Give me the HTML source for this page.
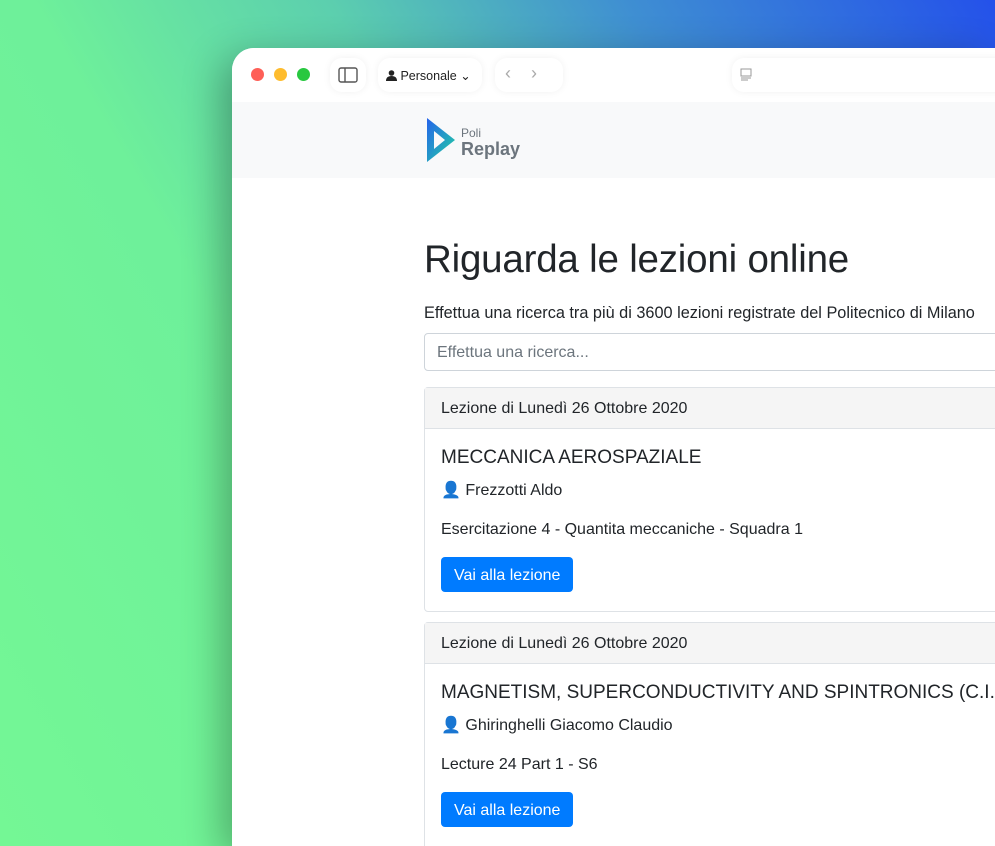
<!DOCTYPE html>
<html><head><meta charset="utf-8"><style>
*{box-sizing:border-box;margin:0;padding:0}
html,body{width:995px;height:846px;overflow:hidden}
body{position:relative;font-family:"Liberation Sans",sans-serif;
background:linear-gradient(60deg,#74f795 0%,#6ef09a 35%,#5ccfae 55%,#3f8fd2 75%,#2451ea 100%);}
.win{position:absolute;left:232px;top:48px;width:763px;height:798px;background:#fff;border-radius:22px 0 0 0;overflow:hidden;box-shadow:-10px 10px 40px rgba(0,0,0,.3);color:#212529}
.tb{height:54px;background:#fff;position:relative}
.dot{position:absolute;top:20px;width:13px;height:13px;border-radius:50%}
.pill{position:absolute;top:10px;height:34px;background:#fff;border-radius:12px;box-shadow:0 0 8px rgba(0,0,0,.06)}
.nav{height:76px;background:#f8f9fa;position:relative}
.c{position:absolute;left:192px;color:#212529}
h1{font-size:38.5px;font-weight:400;letter-spacing:-.2px}
.card{position:absolute;left:192px;width:620px;border:1px solid #dee2e6;border-radius:4px}
.ch{height:41px;background:#f5f5f5;border-bottom:1px solid #dee2e6;padding:12px 16px;font-size:16px;color:#212529}
.cb{padding:0 16px;position:relative;color:#212529}
.btn{display:inline-block;background:#007bff;color:#fff;font-size:16px;padding:10px 13px 7px;border-radius:4px}
</style></head><body>
<div class="win">
 <div class="tb">
  <div class="dot" style="left:19px;background:#fe5f57"></div>
  <div class="dot" style="left:42px;background:#febc2e"></div>
  <div class="dot" style="left:65px;background:#28c840"></div>
  <div class="pill" style="left:98px;width:36px"><svg width="20" height="16" style="position:absolute;left:8px;top:9px"><rect x="1" y="1" width="18" height="14" rx="2" fill="none" stroke="#555" stroke-width="1.4"/><line x1="7" y1="1" x2="7" y2="15" stroke="#555" stroke-width="1.4"/></svg></div>
  <div class="pill" style="left:146px;width:104px;font-size:12.5px;color:#222;padding:10px 0 0 8px"><svg width="11" height="11" style="vertical-align:-1px"><circle cx="5.5" cy="3" r="2.8" fill="#222"/><path d="M0 11 Q0 6 5.5 6 Q11 6 11 11Z" fill="#222"/></svg> Personale ⌄</div>
  <div class="pill" style="left:263px;width:68px;color:#aaa;font-size:18px;padding:5px 0 0 10px">‹ &nbsp;&nbsp; ›</div>
  <div class="pill" style="left:500px;width:400px"><svg width="14" height="14" style="position:absolute;left:8px;top:10px"><rect x="1" y="1" width="10" height="7" fill="none" stroke="#999"/><line x1="1" y1="10" x2="11" y2="10" stroke="#999"/><line x1="1" y1="12" x2="8" y2="12" stroke="#999"/></svg></div>
 </div>
 <div class="nav">
  <svg width="32" height="48" style="position:absolute;left:193px;top:14px"><defs><linearGradient id="g" x1="0" y1="0" x2="1" y2="1"><stop offset="0" stop-color="#2563eb"/><stop offset="1" stop-color="#22d3a0"/></linearGradient></defs><path d="M2 2 L30 24 L2 46 Z M9 15 L9 33 L20 24 Z" fill="url(#g)" fill-rule="evenodd"/></svg>
  <div style="position:absolute;left:229px;top:24px;color:#6c757d;font-size:12px">Poli</div>
  <div style="position:absolute;left:229px;top:37px;color:#6c757d;font-size:18px;font-weight:bold">Replay</div>
 </div>
 <div class="c" style="top:190px"><h1>Riguarda le lezioni online</h1></div>
 <div class="c" style="top:256px;font-size:16.3px">Effettua una ricerca tra più di 3600 lezioni registrate del Politecnico di Milano</div>
 <div style="position:absolute;left:192px;top:285px;width:620px;height:38px;border:1px solid #ced4da;border-radius:4px;padding:10px 12px;color:#6c757d;font-size:16px">Effettua una ricerca...</div>
 <div class="card" style="top:339px;height:225px">
  <div class="ch">Lezione di Lunedì 26 Ottobre 2020</div>
  <div class="cb"><div style="font-size:19px;padding-top:18px">MECCANICA AEROSPAZIALE</div>
  <div style="font-size:16px;margin-top:11px">👤 Frezzotti Aldo</div>
  <div style="font-size:16px;margin-top:21px">Esercitazione 4 - Quantita meccaniche - Squadra 1</div>
  <div class="btn" style="margin-top:18px">Vai alla lezione</div></div>
 </div>
 <div class="card" style="top:574px;height:260px">
  <div class="ch">Lezione di Lunedì 26 Ottobre 2020</div>
  <div class="cb"><div style="font-size:19px;padding-top:18px;white-space:nowrap">MAGNETISM, SUPERCONDUCTIVITY AND SPINTRONICS (C.I.)</div>
  <div style="font-size:16px;margin-top:11px">👤 Ghiringhelli Giacomo Claudio</div>
  <div style="font-size:16px;margin-top:21px">Lecture 24 Part 1 - S6</div>
  <div class="btn" style="margin-top:18px">Vai alla lezione</div></div>
 </div>
</div>
</body></html>
